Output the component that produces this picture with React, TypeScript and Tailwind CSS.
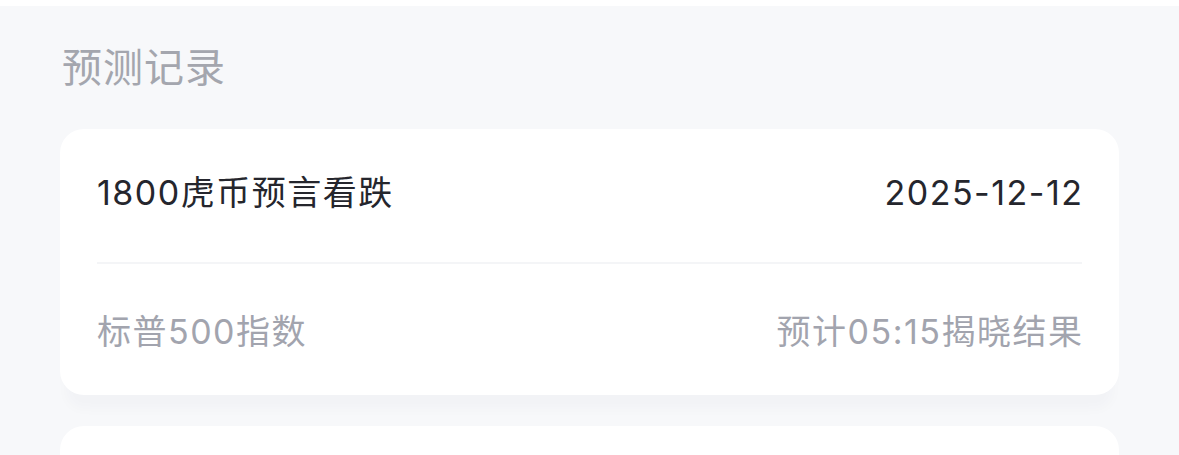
import React from "react";

const font = { fontFamily: '"Inter", "Noto Sans CJK SC", sans-serif' };

export default function App() {
  return (
    <div className="w-[1179px] h-[455px] overflow-hidden bg-[#f7f8fa]" style={font}>
      <div className="h-[6px] bg-white" />
      <div className="px-[60px]">
        <div className="h-[123px] flex items-center pl-[2px] text-[40px] tracking-[1px] text-[#a4a6ae]">预测记录</div>
        <div className="rounded-[24px] bg-white px-[37px] shadow-[0_20px_12px_-6px_rgba(30,40,70,0.025)]">
          <div className="h-[133px] pb-[7px] flex items-center justify-between text-[34px] tracking-[1.5px] text-[#25262d]">
            <span className="-mr-[1.5px]">1800虎币预言看跌</span>
            <span className="-mr-[1.5px]">2025-12-12</span>
          </div>
          <div className="h-[2px] bg-[#f4f5f7]" />
          <div className="h-[131px] pt-[3px] flex items-center justify-between text-[34px] tracking-[1.5px] text-[#a2a4ae]">
            <span className="-mr-[1.5px]">标普500指数</span>
            <span className="-mr-[1.5px]">预计05:15揭晓结果</span>
          </div>
        </div>
        <div className="mt-[31px] h-[200px] rounded-[24px] bg-white" />
      </div>
    </div>
  );
}
